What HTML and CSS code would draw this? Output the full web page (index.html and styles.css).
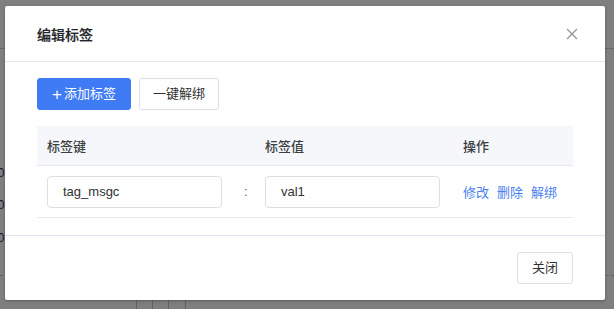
FILE: index.html
```html
<!DOCTYPE html>
<html lang="zh">
<head>
<meta charset="utf-8">
<title>编辑标签</title>
<link rel="stylesheet" href="styles.css">
</head>
<body>
<div class="backdrop">
  <div class="bg-line bg-line-top"></div>
  <div class="bg-line bg-line-dash"></div>
  <span class="bg-num n1">10</span>
  <span class="bg-num n2">10</span>
  <span class="bg-num n3">10</span>
  <div class="bg-cols">
    <span class="bg-col"></span><span class="bg-col"></span><span class="bg-col"></span><span class="bg-col"></span>
  </div>
</div>
<div class="mask">
  <div class="dialog">
    <div class="dialog-header">
      <span class="dialog-title">编辑标签</span>
      <svg class="close-icon" width="12" height="12" viewBox="0 0 12 12"><path d="M1 1L11 11M11 1L1 11" stroke="#909399" stroke-width="1.2" fill="none"/></svg>
    </div>
    <div class="dialog-body">
      <div class="toolbar">
        <button class="btn btn-primary"><span class="plus">+</span>添加标签</button>
        <button class="btn">一键解绑</button>
      </div>
      <div class="table">
        <div class="th">标签键</div>
        <div class="th"></div>
        <div class="th">标签值</div>
        <div class="th">操作</div>
        <div class="td"><div class="input">tag_msgc</div></div>
        <div class="td td-colon">:</div>
        <div class="td"><div class="input">val1</div></div>
        <div class="td td-ops"><a class="link">修改</a><a class="link">删除</a><a class="link">解绑</a></div>
      </div>
    </div>
    <div class="dialog-footer">
      <button class="btn btn-close">关闭</button>
    </div>
  </div>
</div>
</body>
</html>
```
FILE: styles.css
```css
* { box-sizing: border-box; }
html, body {
  margin: 0;
  padding: 0;
  width: 614px;
  height: 309px;
  overflow: hidden;
  background: #fff;
  font-family: "Liberation Sans", "Noto Sans CJK SC", sans-serif;
}
.backdrop {
  position: absolute;
  inset: 0;
  background: #fff;
}
.bg-line {
  position: absolute;
  left: 0;
  right: 0;
  height: 1px;
}
.bg-line-top { top: 48px; background: #d0d0d0; }
.bg-line-dash { top: 275px; border-top: 1px dashed #c8c8c8; }
.bg-num {
  position: absolute;
  left: -9px;
  font-size: 12px;
  line-height: 14px;
  color: #2c2c68;
}
.n1 { top: 166px; }
.n2 { top: 198px; }
.n3 { top: 231px; }
.bg-cols {
  position: absolute;
  left: 136px;
  top: 300px;
  height: 9px;
  display: flex;
}
.bg-col {
  width: 16px;
  height: 9px;
  border-left: 1px solid #c4c4c4;
}
.bg-col:nth-child(3) { width: 17px; }
.mask {
  position: absolute;
  inset: 0;
  background: rgba(0, 0, 0, 0.5);
}
.dialog {
  position: absolute;
  left: 5px;
  top: 6px;
  width: 600px;
  height: 294px;
  background: #fff;
  border-radius: 2px;
  box-shadow: 0 1px 3px rgba(0,0,0,0.3);
  display: flex;
  flex-direction: column;
}
.dialog-header {
  height: 56px;
  padding: 0 27px 0 32px;
  display: flex;
  align-items: center;
  justify-content: space-between;
  border-bottom: 1px solid #e4e4ee;
}
.dialog-title {
  font-size: 14px;
  font-weight: 500;
  color: #222427;
  padding-top: 1px;
  -webkit-text-stroke: 0.2px #222427;
}
.close-icon { display: block; }
.dialog-body {
  padding: 16px 32px 17px;
  border-bottom: 1px solid #e4e4ee;
}
.toolbar {
  display: flex;
  gap: 8px;
  margin-bottom: 16px;
}
.btn {
  height: 32px;
  padding: 0 13px;
  border: 1px solid #dcdfe6;
  border-radius: 3px;
  background: #fff;
  color: #303133;
  font-family: "Liberation Sans", "Noto Sans CJK SC", sans-serif;
  font-size: 13px;
  line-height: 30px;
  display: inline-flex;
  align-items: center;
}
.btn-primary {
  background: #3f7bf5;
  border-color: #3f7bf5;
  color: #fff;
  width: 94px;
  justify-content: center;
}
.plus {
  font-size: 17px;
  font-weight: 300;
  margin-right: 2px;
  line-height: 1;
}
.table {
  display: grid;
  grid-template-columns: 198px 20px 198px 120px;
}
.th {
  height: 40px;
  background: #f5f7fa;
  border-bottom: 1px solid #e6e8ee;
  padding-left: 10px;
  font-size: 13px;
  font-weight: 500;
  color: #3a3d42;
  display: flex;
  align-items: center;
}
.td {
  height: 52px;
  border-bottom: 1px solid #e6e8ee;
  padding-left: 10px;
  display: flex;
  align-items: center;
}
.input {
  width: 175px;
  height: 32px;
  border: 1px solid #dcdfe6;
  border-radius: 4px;
  padding-left: 15px;
  font-size: 13px;
  line-height: 30px;
  color: #303133;
}
.td-colon {
  padding-left: 9px;
  font-size: 13px;
  color: #606266;
}
.td-ops { gap: 8px; }
.link {
  font-size: 13px;
  color: #4a80f0;
  cursor: pointer;
}
.dialog-footer {
  flex: 1;
  display: flex;
  justify-content: flex-end;
  align-items: flex-start;
  padding: 16px 32px 0;
}
.btn-close {
  height: 32px;
  padding: 0 14px;
}
```
